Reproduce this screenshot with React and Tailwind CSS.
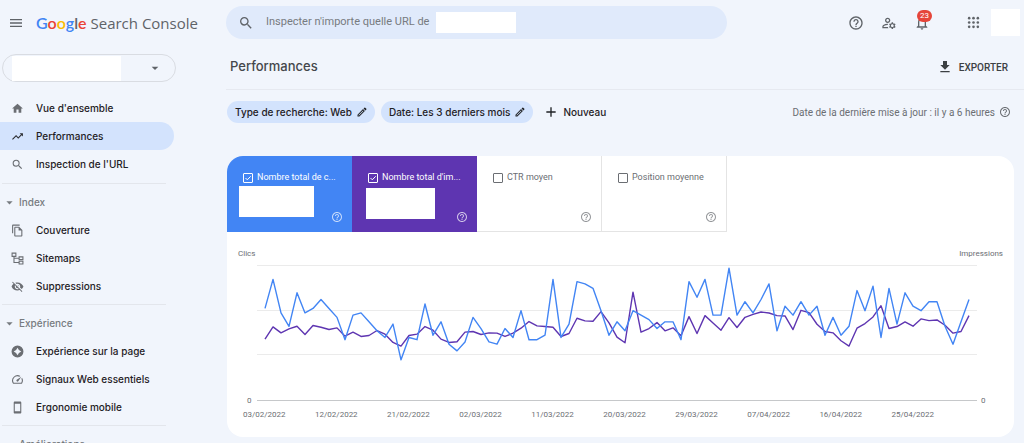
import React, { useState } from 'react'
import {
    MdAdd,
    MdArrowDropDown,
    MdFileDownload,
    MdHelpOutline,
    MdHome,
    MdMenu,
    MdOutlineEdit,
    MdOutlineFileCopy,
    MdOutlineManageAccounts,
    MdOutlineNotifications,
    MdOutlineSpeed,
    MdOutlineStayCurrentPortrait,
    MdSearch,
    MdTrendingUp,
    MdVisibilityOff,
} from 'react-icons/md'

const clicks = [
    41, 54, 39, 33, 48, 39, 41, 45, 41, 37, 27, 38, 39, 35, 31, 28, 34, 18, 28, 27, 43, 29, 35,
    25, 22, 26, 37, 32, 26, 25, 32, 28, 40, 27, 27, 29, 54, 28, 34, 53, 52, 50, 40, 29, 35, 31,
    40, 38, 36, 32, 35, 35, 27, 53, 46, 54, 38, 38, 59, 38, 44, 39, 45, 52, 31, 42, 38, 44, 38,
    42, 29, 37, 29, 33, 49, 40, 51, 28, 50, 34, 48, 42, 40, 44, 44, 33, 25, 35, 45,
]

const impressions = [
    184, 221, 203, 215, 223, 198, 225, 220, 213, 218, 193, 205, 192, 195, 210, 199, 174, 163, 195,
    199, 222, 211, 184, 174, 176, 205, 207, 198, 203, 202, 192, 202, 217, 237, 224, 222, 220, 192,
    201, 247, 239, 238, 267, 233, 190, 173, 326, 205, 216, 234, 209, 218, 194, 252, 201, 255, 233,
    211, 249, 219, 250, 259, 266, 263, 255, 254, 213, 271, 264, 229, 207, 203, 179, 163, 217, 231,
    251, 285, 216, 222, 236, 223, 245, 240, 242, 226, 202, 207, 255,
]

const dates = [
    '03/02/2022', '12/02/2022', '21/02/2022', '02/03/2022', '11/03/2022',
    '20/03/2022', '29/03/2022', '07/04/2022', '16/04/2022', '25/04/2022',
]

const SitemapIcon = ({ className }) => (
    <svg viewBox="0 0 24 24" fill="none" stroke="currentColor" strokeWidth="2" className={className}>
        <path d="M2 2h7v6H2zM15 9h7v5h-7zM15 17h7v5h-7zM5.500 8v11.500H15M5.500 11.500H15" />
    </svg>
)

const PageExperienceIcon = ({ className }) => (
    <svg viewBox="0 0 24 24" fill="currentColor" className={className}>
        <path
            fillRule="evenodd"
            d="M12 1a11 11 0 1 0 0 22a11 11 0 1 0 0-22zM12 5l2.600 4.400L19 12l-4.400 2.600L12 19l-2.600-4.400L5 12l4.400-2.600z"
        />
    </svg>
)

const AppsIcon = ({ className }) => (
    <svg viewBox="0 0 24 24" fill="currentColor" className={className}>
        {[4, 12, 20].map((cy) => [4, 12, 20].map((cx) => <circle key={`${cx}-${cy}`} cx={cx} cy={cy} r="2.4" />))}
    </svg>
)

const sections = [
    {
        title: 'Index',
        items: [
            { label: 'Couverture', icon: MdOutlineFileCopy },
            { label: 'Sitemaps', icon: SitemapIcon },
            { label: 'Suppressions', icon: MdVisibilityOff },
        ],
    },
    {
        title: 'Expérience',
        items: [
            { label: 'Expérience sur la page', icon: PageExperienceIcon },
            { label: 'Signaux Web essentiels', icon: MdOutlineSpeed },
            { label: 'Ergonomie mobile', icon: MdOutlineStayCurrentPortrait },
        ],
    },
    { title: 'Améliorations', items: [] },
]

const Header = () => (
    <header className="flex h-[45px] shrink-0 items-center">
        <div className="flex w-[226px] shrink-0 items-center gap-3 pl-2">
            <button aria-label="Menu">
                <MdMenu className="size-4 text-[#5f6368]" />
            </button>
            <a href="#" className="whitespace-nowrap font-['Open_Sans',sans-serif] text-[15px] text-[#5f6368]">
                <span className="font-['Lato',sans-serif] text-[16px] font-semibold">
                    <span className="text-[#4285f4]">G</span>
                    <span className="text-[#ea4335]">o</span>
                    <span className="text-[#fbbc04]">o</span>
                    <span className="text-[#4285f4]">g</span>
                    <span>l</span>
                    <span className="text-[#ea4335]">e</span>
                </span>{' '}
                Search Console
            </a>
        </div>
        <label className="flex h-[33px] w-[501px] min-w-0 items-center rounded-full bg-[#e0eafb] pl-3">
            <MdSearch className="mr-3 size-4 shrink-0 text-[#5f6368]" />
            <input
                type="text"
                aria-label="Inspecter une URL"
                placeholder="Inspecter n'importe quelle URL de"
                className="w-[170px] text-[11px] outline-none placeholder:text-[#777b80]"
            />
            <span className="h-[21px] w-20 bg-white" />
        </label>
        <div className="ml-auto flex shrink-0 items-center pr-1 text-[#5f6368]">
            <button aria-label="Aide" className="mr-[17px]">
                <MdHelpOutline className="size-4" />
            </button>
            <button aria-label="Utilisateurs" className="mr-[17px]">
                <MdOutlineManageAccounts className="size-4" />
            </button>
            <button aria-label="Notifications" className="relative mr-[37px]">
                <MdOutlineNotifications className="size-4" />
                <span className="absolute -top-[5px] left-[3px] flex h-3 w-[15px] items-center justify-center rounded-full bg-[#e5453a] text-[8px] text-white">
                    23
                </span>
            </button>
            <button aria-label="Applications" className="mr-[11px]">
                <AppsIcon className="size-[13px]" />
            </button>
            <span className="h-[27px] w-[29px] bg-white" />
        </div>
    </header>
)

const NavItem = ({ label, icon: Icon, active }) => (
    <a
        href="#"
        className={`flex h-7 items-center gap-3 rounded-r-full pl-[11px] font-['Inter',sans-serif] text-[10px] font-medium text-[#1f2125] ${active ? 'bg-[#d3e3fd]' : ''}`}
    >
        <Icon className={`size-[13px] shrink-0 ${active ? 'text-[#2a2c30]' : 'text-[#6b6e73]'}`} />
        {label}
    </a>
)

const Sidebar = () => (
    <nav className="w-[226px] shrink-0 pt-[9px]">
        <button
            aria-label="Propriété"
            className="ml-[2px] flex h-7 w-[174px] items-center justify-between rounded-full border border-[#d9dce2] pr-3 pl-[9px]"
        >
            <span className="h-[25px] w-[109px] bg-white" />
            <MdArrowDropDown className="size-4 text-[#5f6368]" />
        </button>
        <div className="mt-3 mb-[5px] w-[174px]">
            <NavItem label="Vue d'ensemble" icon={MdHome} />
            <NavItem label="Performances" icon={MdTrendingUp} active />
            <NavItem label="Inspection de l'URL" icon={MdSearch} />
        </div>
        {sections.map((section) => (
            <div key={section.title} className="ml-[2px] w-[164px] border-t border-[#e3e6ec] py-1">
                <button className="flex h-7 items-center font-['Inter',sans-serif] text-[10px] font-medium text-[#777b80]">
                    <MdArrowDropDown className="mr-[2px] size-[15px]" />
                    {section.title}
                </button>
                <div className="-ml-[2px]">
                    {section.items.map((item) => (
                        <NavItem key={item.label} {...item} />
                    ))}
                </div>
            </div>
        ))}
    </nav>
)

const Chip = ({ children }) => (
    <button className="flex h-[22px] items-center gap-1 rounded-full bg-[#d3e3fd] pr-[7px] pl-2 font-['Inter',sans-serif] text-[10px] font-medium text-[#1f2125]">
        {children}
        <MdOutlineEdit className="size-3" />
    </button>
)

const Metric = ({ label, card, box, checked, onChange }) => (
    <div className={`flex h-[76px] w-[125px] flex-col pt-4 pl-4 ${card}`}>
        <label className="flex h-3 items-center gap-1 text-[9px] whitespace-nowrap">
            <span className="relative flex size-[10px] shrink-0">
                <input
                    type="checkbox"
                    checked={checked}
                    onChange={onChange}
                    className="size-[10px] appearance-none rounded-[1px] border border-current"
                />
                {checked && (
                    <svg viewBox="0 0 10 10" fill="none" stroke="currentColor" className="pointer-events-none absolute inset-0">
                        <path d="M2.500 5l1.800 1.800L7.700 3.300" />
                    </svg>
                )}
            </span>
            {label}
        </label>
        <div className="flex items-end justify-between pr-[9px]">
            <span className={box} />
            <button aria-label={`Aide : ${label}`} className="mt-[27px] opacity-70">
                <MdHelpOutline className="size-3" />
            </button>
        </div>
    </div>
)

const Line = ({ data, max, color }) => (
    <polyline
        points={data.map((v, i) => `${i * 8},${135 - (v / max) * 135}`).join(' ')}
        fill="none"
        stroke={color}
        strokeWidth="1.4"
        strokeLinejoin="round"
        vectorEffect="non-scaling-stroke"
    />
)

const Chart = () => (
    <div className="px-[11px] py-4 text-[8px] leading-3 text-[#6b6e73]">
        <div className="flex justify-between">
            <span>Clics</span>
            <span>Impressions</span>
        </div>
        <div className="mt-[5px] flex items-end">
            <span className="-mb-[6px] w-[19px] pl-[9px]">0</span>
            <div className="grid h-[136px] flex-1 grid-rows-3 border-y border-t-[#ebebeb] border-b-[#c6c8ca]">
                <div className="col-start-1 row-start-1 border-b border-[#ebebeb]" />
                <div className="col-start-1 row-start-2 border-b border-[#ebebeb]" />
                <svg
                    viewBox="0 0 704 135"
                    preserveAspectRatio="none"
                    className="z-10 col-start-1 row-span-3 row-start-1 mx-2 h-full w-[calc(100%-16px)] overflow-visible"
                >
                    <Line data={impressions} max={405} color="#5e35b1" />
                    <Line data={clicks} max={60} color="#4285f4" />
                </svg>
            </div>
            <span className="-mb-[6px] w-[26px] pl-1">0</span>
        </div>
        <div className="mt-2 mr-[69px] ml-[5px] flex justify-between">
            {dates.map((date) => (
                <span key={date}>{date}</span>
            ))}
        </div>
    </div>
)

const App = () => {
    const [selected, setSelected] = useState({ clicks: true, impressions: true, ctr: false, position: false })

    const toggle = (key) => () => setSelected({ ...selected, [key]: !selected[key] })

    return (
        <div className="flex h-screen flex-col overflow-hidden bg-[#f1f5fc] font-['Roboto',sans-serif]">
            <Header />
            <div className="flex min-h-0 flex-1">
                <Sidebar />
                <main className="min-w-0 flex-1">
                    <div className="flex h-[45px] items-center justify-between border-b border-[#e6e9f0] pr-4 pl-1">
                        <h1 className="font-['Inter',sans-serif] text-[13px] font-medium text-[#44474b]">Performances</h1>
                        <button className="flex items-center gap-[6px] text-[10px] font-medium text-[#3c4043]">
                            <MdFileDownload className="size-4" />
                            EXPORTER
                        </button>
                    </div>
                    <div className="flex h-[66px] items-start pt-[11px] pr-[13px] pl-px">
                        <div className="flex gap-[6px]">
                            <Chip>Type de recherche: Web</Chip>
                            <Chip>Date: Les 3 derniers mois</Chip>
                        </div>
                        <button className="ml-[10px] flex h-[22px] items-center gap-1 font-['Inter',sans-serif] text-[10px] font-medium text-[#1f2125]">
                            <MdAdd className="size-4" />
                            Nouveau
                        </button>
                        <p className="ml-auto flex h-[22px] items-center gap-1 text-[10px] text-[#6b6e73]">
                            Date de la dernière mise à jour : il y a 6 heures
                            <MdHelpOutline className="size-3" />
                        </p>
                    </div>
                    <section className="mr-[10px] ml-px overflow-hidden rounded-2xl bg-white">
                        <div className="flex">
                            <Metric
                                label="Nombre total de c..."
                                card="bg-[#4285f4] text-white"
                                box="-ml-1 mt-[2px] h-[31px] w-[75px] self-start bg-white"
                                checked={selected.clicks}
                                onChange={toggle('clicks')}
                            />
                            <Metric
                                label="Nombre total d'im..."
                                card="bg-[#5e35b1] text-white"
                                box="-ml-[2px] mt-1 h-[31px] w-[69px] self-start bg-white"
                                checked={selected.impressions}
                                onChange={toggle('impressions')}
                            />
                            <Metric
                                label="CTR moyen"
                                card="border-r border-b border-[#e4e4e4] text-[#6b6e73]"
                                checked={selected.ctr}
                                onChange={toggle('ctr')}
                            />
                            <Metric
                                label="Position moyenne"
                                card="border-r border-b border-[#e4e4e4] text-[#6b6e73]"
                                checked={selected.position}
                                onChange={toggle('position')}
                            />
                        </div>
                        <Chart />
                    </section>
                </main>
            </div>
        </div>
    )
}

export default App
